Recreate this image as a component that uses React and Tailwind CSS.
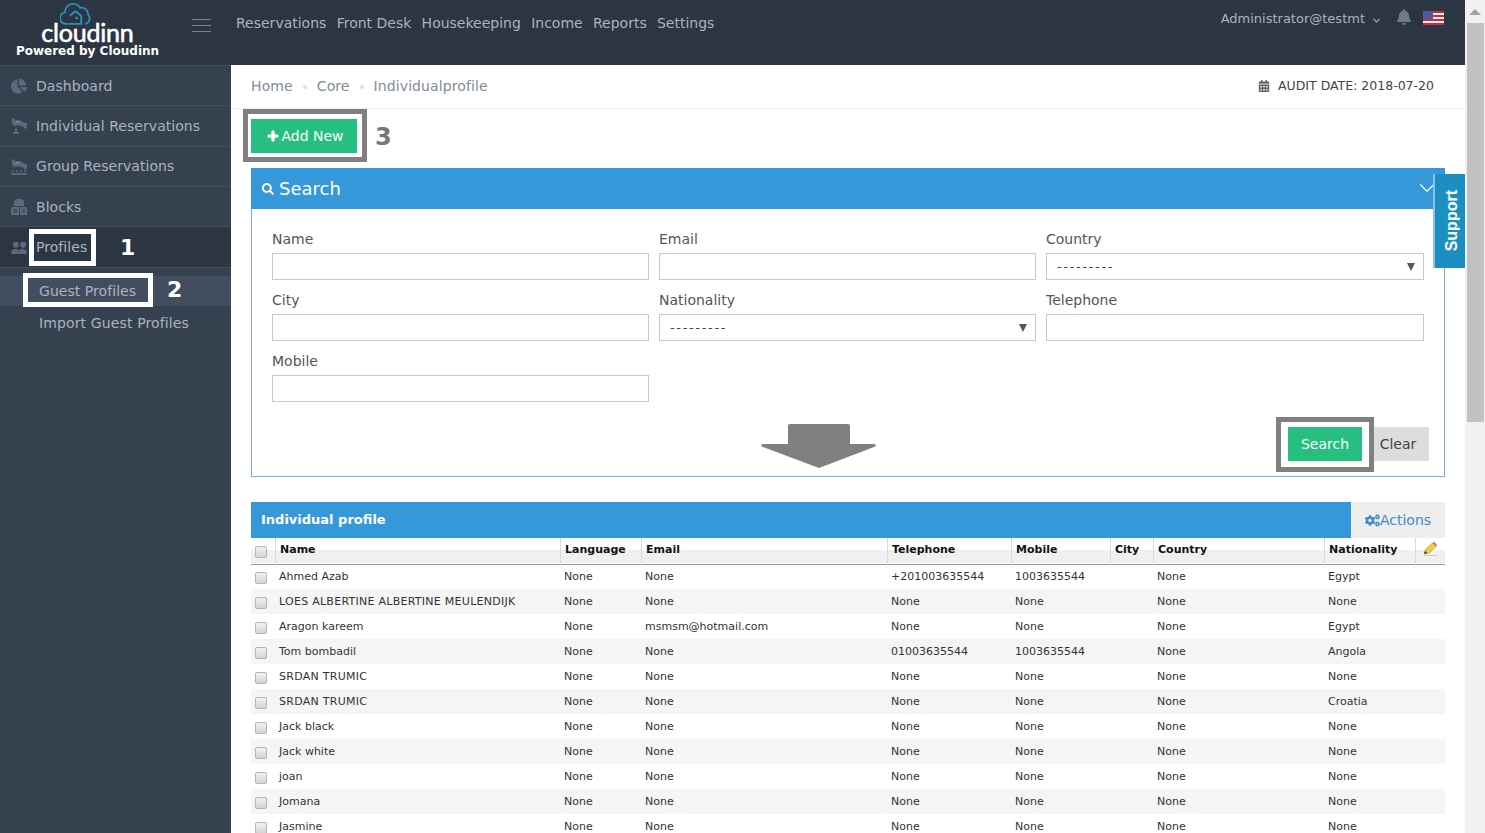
import { ChevronDown } from "lucide-react";
import { FaBell, FaCalendarAlt, FaChartPie, FaCogs, FaPlus, FaSearch } from "react-icons/fa";

const NAV = ["Reservations", "Front Desk", "Housekeeping", "Income", "Reports", "Settings"];

const COLS = [
  { label: "Name", key: "name", w: "w-[285px]" },
  { label: "Language", key: "language", w: "w-[81px]" },
  { label: "Email", key: "email", w: "w-[246px]" },
  { label: "Telephone", key: "telephone", w: "w-[124px]" },
  { label: "Mobile", key: "mobile", w: "w-[99px]" },
  { label: "City", key: "city", w: "w-[43px]" },
  { label: "Country", key: "country", w: "w-[171px]" },
  { label: "Nationality", key: "nationality", w: "w-[91px]" },
];

const row = (name, email, telephone, mobile, nationality) => ({
  name,
  language: "None",
  email,
  telephone,
  mobile,
  city: "",
  country: "None",
  nationality,
});

const ROWS = [
  row("Ahmed Azab", "None", "+201003635544", "1003635544", "Egypt"),
  row("LOES ALBERTINE ALBERTINE MEULENDIJK", "None", "None", "None", "None"),
  row("Aragon kareem", "msmsm@hotmail.com", "None", "None", "Egypt"),
  row("Tom bombadil", "None", "01003635544", "1003635544", "Angola"),
  row("SRDAN TRUMIC", "None", "None", "None", "None"),
  row("SRDAN TRUMIC", "None", "None", "None", "Croatia"),
  row("Jack black", "None", "None", "None", "None"),
  row("Jack white", "None", "None", "None", "None"),
  row("joan", "None", "None", "None", "None"),
  row("Jomana", "None", "None", "None", "None"),
  row("Jasmine", "None", "None", "None", "None"),
];

function BedIcon({ group }) {
  return (
    <svg viewBox="0 0 18 18" className="w-[18px] h-[18px]" fill="#5d6978">
      <path d="M3 1l2 1v2l4-1 6 3 2 0v4l-1 2-2-1v-1L7 8 5 9 2 7 2 2z" />
      <path d="M5 4.5l3-1 2 1-3 1.2z" fill="#7a8594" />
      {group ? (
        <path d="M1 15h16v2H1zM2 12h1.5v2H2zM6 12h1.5v2H6zM10 12h1.5v2H10zM14 12h1.5v2H14z" />
      ) : (
        <path d="M3 15h6v2H3zM5 11.5h2v3H5z" />
      )}
    </svg>
  );
}

function BlocksIcon() {
  return (
    <svg viewBox="0 0 18 18" className="w-[18px] h-[18px]" fill="#5d6978">
      <path d="M6 1h6l2 2v5H4V3z" />
      <path d="M2 9h7v8H1V10zM10 9h6l1 1v7h-7z" />
      <path d="M12 11h3v4h-3zM3 11h4v4H3z" fill="#46525f" />
    </svg>
  );
}

function UsersIcon() {
  return (
    <svg viewBox="0 0 18 14" className="w-[17px] h-[13px]" fill="#5d6978">
      <circle cx="5" cy="4" r="3.2" />
      <circle cx="13" cy="4" r="3.2" />
      <path d="M0 14v-2c0-2 2-3 4-3.5h2c1 .3 2 1 2.5 1.5.5-.5 1.500-1.200 2.500-1.500h2c2 .5 4 1.500 4 3.500v2z" />
    </svg>
  );
}

function SideItem({ icon, label, active }) {
  return (
    <div
      className={`h-[40.33px] pt-px flex items-center pl-[10px] gap-2 border-b border-[#414d5c] text-[14px] tracking-[0.05px] text-[#a9b3bf] ${
        active ? "bg-[#2c3542]" : ""
      }`}
    >
      <span className="w-[18px] flex justify-center">{icon}</span>
      <span>{label}</span>
    </div>
  );
}

function Field({ label, select }) {
  return (
    <div className="h-[61px]">
      <div className="h-[24px] text-[14px] leading-[20px] text-[#555]">{label}</div>
      {select ? (
        <div className="h-[27px] border border-[#c8c8c8] flex items-center justify-between pl-[10px] pr-[8px] text-[13px] text-[#444]">
          <span className="tracking-[1.65px]">---------</span>
          <span className="w-0 h-0 border-l-[4px] border-r-[4px] border-t-[8px] border-l-transparent border-r-transparent border-t-[#555]" />
        </div>
      ) : (
        <input className="block w-full h-[27px] border border-[#c8c8c8] bg-white" />
      )}
    </div>
  );
}

function Check() {
  return <span className="block w-[12px] h-[12px] rounded-[2px] border border-[#b5b5b5] bg-gradient-to-b from-[#f2f2f2] to-[#d4d4d4]" />;
}

export default function App() {
  return (
    <div className="h-screen flex overflow-hidden bg-white font-['DejaVu_Sans',Verdana,sans-serif]">
      <div className="w-[1465px] flex flex-col shrink-0">
        {/* Top bar */}
        <header className="h-[65px] shrink-0 bg-[#2c3542] flex">
          <div className="w-[175px] shrink-0 flex flex-col items-center pt-[2px]">
            <svg viewBox="2 1 26 20" className="w-[31px] h-[23px] mr-[24px]" fill="none" stroke="#2a8fc0" strokeWidth="1.6">
              <path d="M8 20H7a5 5 0 0 1-1-10 7 7 0 0 1 13-4 6 6 0 0 1 7 6 5 5 0 0 1-2 8" strokeLinecap="round" />
              <path d="M9 20h11v-7l-5-4-5 4" strokeLinejoin="round" />
              <circle cx="16" cy="15" r="1.200" fill="#2a8fc0" stroke="none" />
            </svg>
            <div className="h-[18px] -mt-[2px] text-[25px] leading-[18px] font-['Lato',sans-serif] text-white tracking-[-0.2px] [-webkit-text-stroke:0.6px_white]">cloudinn</div>
            <div className="mt-[3px] text-[12px] leading-[14px] font-bold text-white whitespace-nowrap">Powered by Cloudinn</div>
          </div>
          <div className="w-[61px] shrink-0 pt-[19px] pl-[17px]">
            <div className="w-[19px] h-[13px] border-y border-[#7a8594] flex items-center">
              <div className="w-full h-px bg-[#7a8594]" />
            </div>
          </div>
          <nav className="flex-1 flex gap-[10.3px] pt-[14px] text-[14px] leading-[18px] text-[#a9b3bf]">
            {NAV.map((n) => (
              <span key={n}>{n}</span>
            ))}
          </nav>
          <div className="flex items-start pt-[9px] pr-[21px] text-[#a9b3bf]">
            <span className="text-[13px] leading-[18px] mt-px">Administrator@testmt</span>
            <ChevronDown className="w-[11px] h-[11px] ml-[6px] mt-[6px]" strokeWidth={2.5} />
            <FaBell className="w-[16px] h-[16px] ml-[14px] text-[#6d7a8b]" />
            <svg viewBox="0 0 21 14" className="w-[21px] h-[14px] ml-[11px] mt-[2px]">
              <rect width="21" height="14" fill="#f4f4f4" />
              <path d="M0 0h21v2H0zM0 4h21v2H0zM0 8h21v2H0zM0 12h21v2H0z" fill="#d2263a" />
              <rect width="10" height="8" fill="#4a5a9a" />
            </svg>
          </div>
        </header>

        <div className="flex-1 flex min-h-0">
          {/* Sidebar */}
          <aside className="w-[231px] shrink-0 bg-[#364150]">
            <div className="border-t border-[#414d5c]">
              <SideItem icon={<FaChartPie className="w-[16px] h-[16px] text-[#5d6978]" />} label="Dashboard" />
              <SideItem icon={<BedIcon />} label="Individual Reservations" />
              <SideItem icon={<BedIcon group />} label="Group Reservations" />
              <SideItem icon={<BlocksIcon />} label="Blocks" />
              <div className="relative">
                <SideItem active icon={<UsersIcon />} label="Profiles" />
                <span className="absolute left-[29px] top-[2px] w-[67px] h-[37px] border-[5px] border-white" />
                <span className="absolute left-[120px] top-[8px] text-[22px] leading-[26px] font-bold text-white">1</span>
              </div>
            </div>
            <div className="pt-[8.4px]">
              <div className="relative h-[30px] bg-[#424e5f] pl-[39px] text-[14px] leading-[31px] tracking-[0.05px] text-[#a9b3bf]">
                Guest Profiles
                <span className="absolute left-[23px] top-[-3px] w-[130px] h-[34px] border-[5px] border-white" />
                <span className="absolute left-[167px] top-0 text-[22px] leading-[28px] font-bold text-white">2</span>
              </div>
              <div className="h-[34px] pl-[39px] text-[14px] leading-[34px] tracking-[0.13px] text-[#a9b3bf]">Import Guest Profiles</div>
            </div>
          </aside>

          {/* Main */}
          <main className="relative flex-1 min-w-0 overflow-hidden">
            <div className="h-[44px] border-b border-[#eeeeee] flex items-center justify-between pl-[20px] pr-[31px]">
              <div className="flex items-center text-[14px] tracking-[0.1px] text-[#7f8c9a]">
                <span>Home</span>
                <span className="w-[4px] h-[4px] rounded-full bg-[#dde2e6] mx-[10px]" />
                <span>Core</span>
                <span className="w-[4px] h-[4px] rounded-full bg-[#dde2e6] mx-[10px]" />
                <span>Individualprofile</span>
              </div>
              <div className="flex items-center gap-[8px] text-[12.5px] text-[#444] -mt-px">
                <FaCalendarAlt className="w-[12px] h-[12px] text-[#666]" />
                <span>AUDIT DATE: 2018-07-20</span>
              </div>
            </div>

            <div className="px-[20px]">
              {/* Add button */}
              <div className="relative h-[59px] pt-[10px]">
                <button className="w-[106px] h-[34px] pl-[3px] bg-[#26bf7f] text-white text-[14px] flex items-center justify-center gap-[2px]">
                  <FaPlus className="w-[12px] h-[12px] stroke-[40]" />
                  Add New
                </button>
                <span className="absolute left-[-8px] top-0 w-[124px] h-[53px] border-[5px] border-[#808080]" />
                <span className="absolute left-[124px] top-[13px] text-[24px] leading-[30px] font-bold text-[#777]">3</span>
              </div>

              {/* Search panel */}
              <section className="relative h-[309px] border border-[#7fb1d1]">
                <div className="h-[41px] -mt-px -mx-px bg-[#3498db] flex items-center pl-[11px] gap-[5px] text-white text-[18px]">
                  <FaSearch className="w-[12px] h-[12px]" />
                  <span>Search</span>
                </div>
                <div className="grid grid-cols-[377px_377px_378px] gap-x-[10px] px-[20px] pt-[20px]">
                  <Field label="Name" />
                  <Field label="Email" />
                  <Field label="Country" select />
                  <Field label="City" />
                  <Field label="Nationality" select />
                  <Field label="Telephone" />
                  <Field label="Mobile" />
                </div>
                <svg viewBox="0 0 115 44" className="absolute left-[509px] top-[255px] w-[115px] h-[44px]" fill="#808080">
                  <path d="M29 0h58a2 2 0 0 1 2 2v18h23c3 0 4 2 1 3L58 44 2 23c-3-1-2-3 1-3h24V2a2 2 0 0 1 2-2z" />
                </svg>
                <div className="absolute right-[15px] top-[258px] flex">
                  <button className="w-[74px] h-[34px] bg-[#26bf7f] text-white text-[14px]">Search</button>
                  <button className="w-[62px] h-[34px] ml-[5px] bg-[#dddddd] text-[#444] text-[14px]">Clear</button>
                </div>
                <span className="absolute left-[1024px] top-[248px] w-[98px] h-[55px] border-[5px] border-[#808080]" />
                <span className="absolute left-[1029px] top-[253px] w-[88px] h-[45px] border-[5px] border-white" />
              </section>

              {/* Results */}
              <div className="mt-[25px]">
                <div className="h-[36px] flex">
                  <div className="flex-1 bg-[#3498db] flex items-center pl-[10px] text-white text-[13px] font-bold">Individual profile</div>
                  <div className="w-[94px] bg-[#eeeeee] flex items-center justify-center text-[#3f8cc4] text-[14px]">
                    <FaCogs className="w-[15px] h-[15px]" />
                    Actions
                  </div>
                </div>
                <table className="w-[1194px] table-fixed border-collapse text-[11px] text-[#333]">
                  <thead>
                    <tr className="h-[26px] border-b border-[#999999] bg-[linear-gradient(#ffffff_50%,#f0f0f0_50%)]">
                      <th className="w-[24px] pl-[4px] pt-[2px]"><Check /></th>
                      {COLS.map((c) => (
                        <th key={c.key} className={`${c.w} border-l border-[#d8d8d8] pl-[4.5px] pb-[1px] text-left font-bold text-[#111]`}>
                          {c.label}
                        </th>
                      ))}
                      <th className="w-[30px] border-l border-[#d8d8d8] pb-[3px]">
                        <svg viewBox="0 0 16 15" className="w-[16px] h-[15px] mx-auto">
                          <path d="M2 12l1.500-4.500 7-6.500 3.500 3.500-7 6.500z" fill="#ecd43c" stroke="#a08a20" strokeWidth="0.6" />
                          <path d="M10.500 1l3.500 3.500 1-1.500-2.500-3z" fill="#d9772e" />
                          <path d="M2 12l1.200-3 2 2z" fill="#333" />
                          <path d="M2 13.500h13" stroke="#c8c8c8" />
                        </svg>
                      </th>
                    </tr>
                  </thead>
                  <tbody>
                    {ROWS.map((r, i) => (
                      <tr key={i} className={`h-[25px] ${i % 2 ? "bg-[#f5f5f5]" : "bg-white"}`}>
                        <td className="pl-[4px] pt-[3px]"><Check /></td>
                        {COLS.map((c) => (
                          <td
                            key={c.key}
                            className={`pl-[4px] pt-px whitespace-nowrap overflow-hidden ${
                              c.key === "name" && r.name === r.name.toUpperCase() ? "tracking-[0.27px]" : ""
                            }`}
                          >
                            {r[c.key]}
                          </td>
                        ))}
                        <td />
                      </tr>
                    ))}
                  </tbody>
                </table>
              </div>
            </div>

            <ChevronDown className="absolute right-[25px] top-[110px] w-[26px] h-[26px] text-white" strokeWidth={1} />

            {/* Support tab */}
            <div className="absolute right-0 top-[109px] w-[32px] h-[94px] pl-[3px] bg-[#1a8fc0] border-l-2 border-[#8ac4e0] flex items-center justify-center">
              <span className="[writing-mode:vertical-rl] rotate-180 font-['Liberation_Sans',sans-serif] font-bold text-[16px] text-white">Support</span>
            </div>
          </main>
        </div>
      </div>

      {/* Scrollbar */}
      <div className="w-5 shrink-0 bg-[#f1f1f1] flex flex-col items-center">
        <div className="h-[23px] flex items-center">
          <span className="w-0 h-0 border-l-[6px] border-r-[6px] border-b-[6px] border-l-transparent border-r-transparent border-b-[#a3a3a3]" />
        </div>
        <div className="w-[17px] h-[399px] bg-[#c1c1c1]" />
      </div>
    </div>
  );
}
